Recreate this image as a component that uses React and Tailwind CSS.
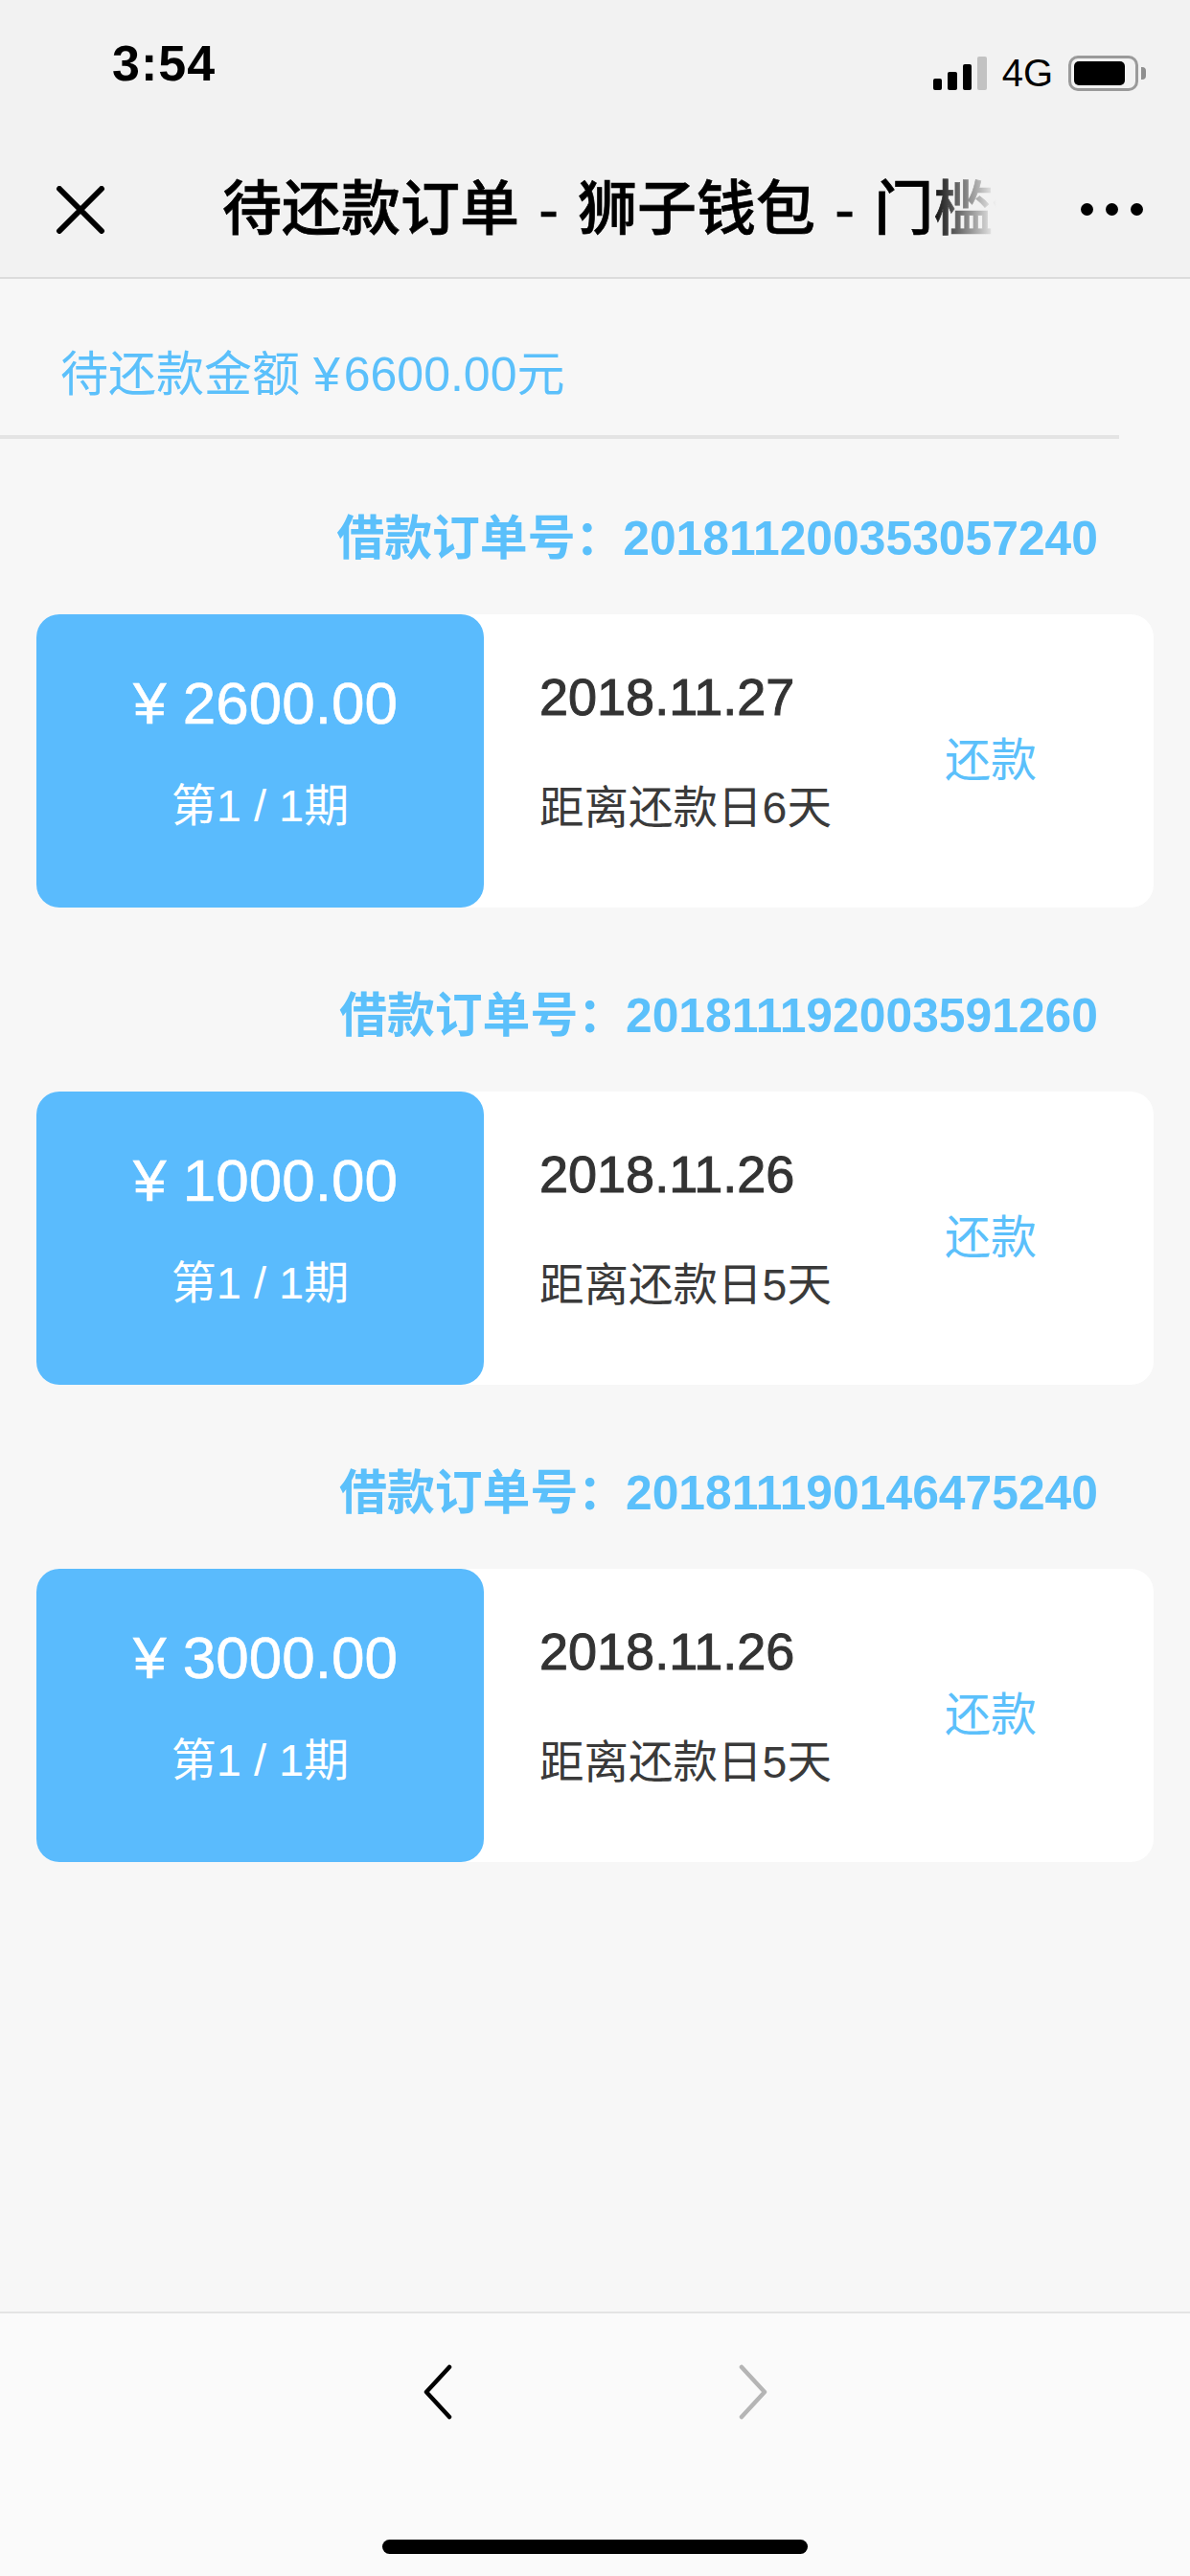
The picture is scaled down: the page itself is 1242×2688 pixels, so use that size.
import React from 'react';

const orders = [
  { no: '201811200353057240', amount: '2600.00', date: '2018.11.27', days: 6 },
  { no: '201811192003591260', amount: '1000.00', date: '2018.11.26', days: 5 },
  { no: '201811190146475240', amount: '3000.00', date: '2018.11.26', days: 5 },
];

function StatusBar() {
  return (
    <div className="flex h-[112px] items-start justify-between pl-[117px] pr-[46px]">
      <span className="mt-[40px] text-[52px] font-bold leading-[52px] tracking-[1px] text-black">3:54</span>
      <div className="mt-[58px] flex items-start">
        <div className="flex h-[36px] items-end gap-[6px]">
          <span className="h-[12px] w-[9px] rounded-[2px] bg-black" />
          <span className="h-[19px] w-[10px] rounded-[2px] bg-black" />
          <span className="h-[27px] w-[9px] rounded-[2px] bg-black" />
          <span className="h-[35px] w-[10px] rounded-[2px] bg-[#c2c2c2]" />
        </div>
        <span className="ml-[16px] mt-[-2px] text-[40px] leading-[40px] text-black">4G</span>
        <div className="ml-[16px] flex items-center">
          <div className="h-[37px] w-[73px] rounded-[10px] border-[3px] border-[#9a9a9a] p-[3px]">
            <div className="h-full w-[53px] rounded-[5px] bg-black" />
          </div>
          <span className="ml-[3px] h-[13px] w-[5px] rounded-r-[4px] bg-[#8f8f8f]" />
        </div>
      </div>
    </div>
  );
}

function NavBar() {
  return (
    <div className="flex h-[179px] border-b-2 border-[#dcdcdc] pt-[53px]">
      <div className="flex h-[107px] w-[232px] shrink-0 items-center pl-[58px]">
        <svg width="52" height="50" viewBox="0 0 52 50" fill="none" stroke="#000" strokeWidth="6" strokeLinecap="round">
          <path d="M4 3l44 44M48 3L4 47" />
        </svg>
      </div>
      <div className="relative h-[107px] w-[808px] overflow-hidden">
        <div className="whitespace-nowrap text-[62px] font-medium leading-[107px] text-black [-webkit-text-stroke:0.7px_black] [word-spacing:3px]">待还款订单 - 狮子钱包 - 门槛借款</div>
        <div className="absolute inset-y-0 right-0 w-[70px] bg-gradient-to-r from-transparent to-[#f2f2f2]" />
      </div>
      <div className="ml-[88px] flex h-[107px] items-center gap-[13px]">
        <span className="h-[13px] w-[13px] rounded-full bg-black" />
        <span className="h-[13px] w-[13px] rounded-full bg-black" />
        <span className="h-[13px] w-[13px] rounded-full bg-black" />
      </div>
    </div>
  );
}

function OrderCard({ order }) {
  return (
    <div className="mb-[9px]">
      <div className="flex h-[183px] items-start justify-end pr-[96px] pt-[74px]">
        <span className="text-[49.8px] font-bold leading-[60px] text-[#5bc0fb]">借款订单号：{order.no}</span>
      </div>
      <div className="mx-[38px] flex h-[306px] rounded-[24px] bg-white">
        <div className="flex w-[467px] shrink-0 flex-col items-center rounded-[24px] bg-[#5abbfd] pt-[58px] text-white">
          <span className="pl-[11px] text-[62px] leading-[70px] [-webkit-text-stroke:0.6px_white]">¥ {order.amount}</span>
          <span className="mt-[42px] text-[47px] leading-[60px]">第1 / 1期</span>
        </div>
        <div className="flex w-[420px] flex-col pl-[58px] pt-[56px]">
          <span className="text-[54px] font-medium leading-[60px] text-[#333333] [-webkit-text-stroke:1px_#333333]">{order.date}</span>
          <span className="mt-[56px] text-[46.5px] leading-[60px] text-[#3a3a3a]">距离还款日{order.days}天</span>
        </div>
        <div className="pl-[61px] pt-[123px] text-[48px] leading-[60px] text-[#5bc0fb]">还款</div>
      </div>
    </div>
  );
}

export default function App() {
  return (
    <div className="flex h-[2688px] w-[1242px] flex-col overflow-hidden bg-[#f7f7f7] font-['Liberation_Sans','Noto_Sans_CJK_SC',sans-serif]">
      <div className="bg-[#f2f2f2]">
        <StatusBar />
        <NavBar />
      </div>

      <div className="mr-[74px] flex h-[167px] items-start border-b-4 border-[#e4e4e4] pl-[63px] pt-[70px]">
        <span className="text-[50px] leading-[60px] text-[#5bc0fb]">
          待还款金额 ¥<span className="ml-[4px]">6600.00</span>元
        </span>
      </div>

      <div className="flex-1">
        {orders.map((o) => (
          <OrderCard key={o.no} order={o} />
        ))}
      </div>

      <div className="h-[276px] border-t-2 border-[#e4e4e4] bg-[#fafafa]">
        <div className="flex justify-center gap-[299px] pt-[53px]">
          <svg width="30" height="58" viewBox="0 0 30 58" fill="none" stroke="#000" strokeWidth="4.5" strokeLinecap="round" strokeLinejoin="round">
            <path d="M27 3L3 29l24 26" />
          </svg>
          <svg width="30" height="58" viewBox="0 0 30 58" fill="none" stroke="#b5b5b5" strokeWidth="4.5" strokeLinecap="round" strokeLinejoin="round">
            <path d="M3 3l24 26L3 55" />
          </svg>
        </div>
        <div className="mx-auto mt-[125px] h-[15px] w-[444px] rounded-full bg-black" />
      </div>
    </div>
  );
}
